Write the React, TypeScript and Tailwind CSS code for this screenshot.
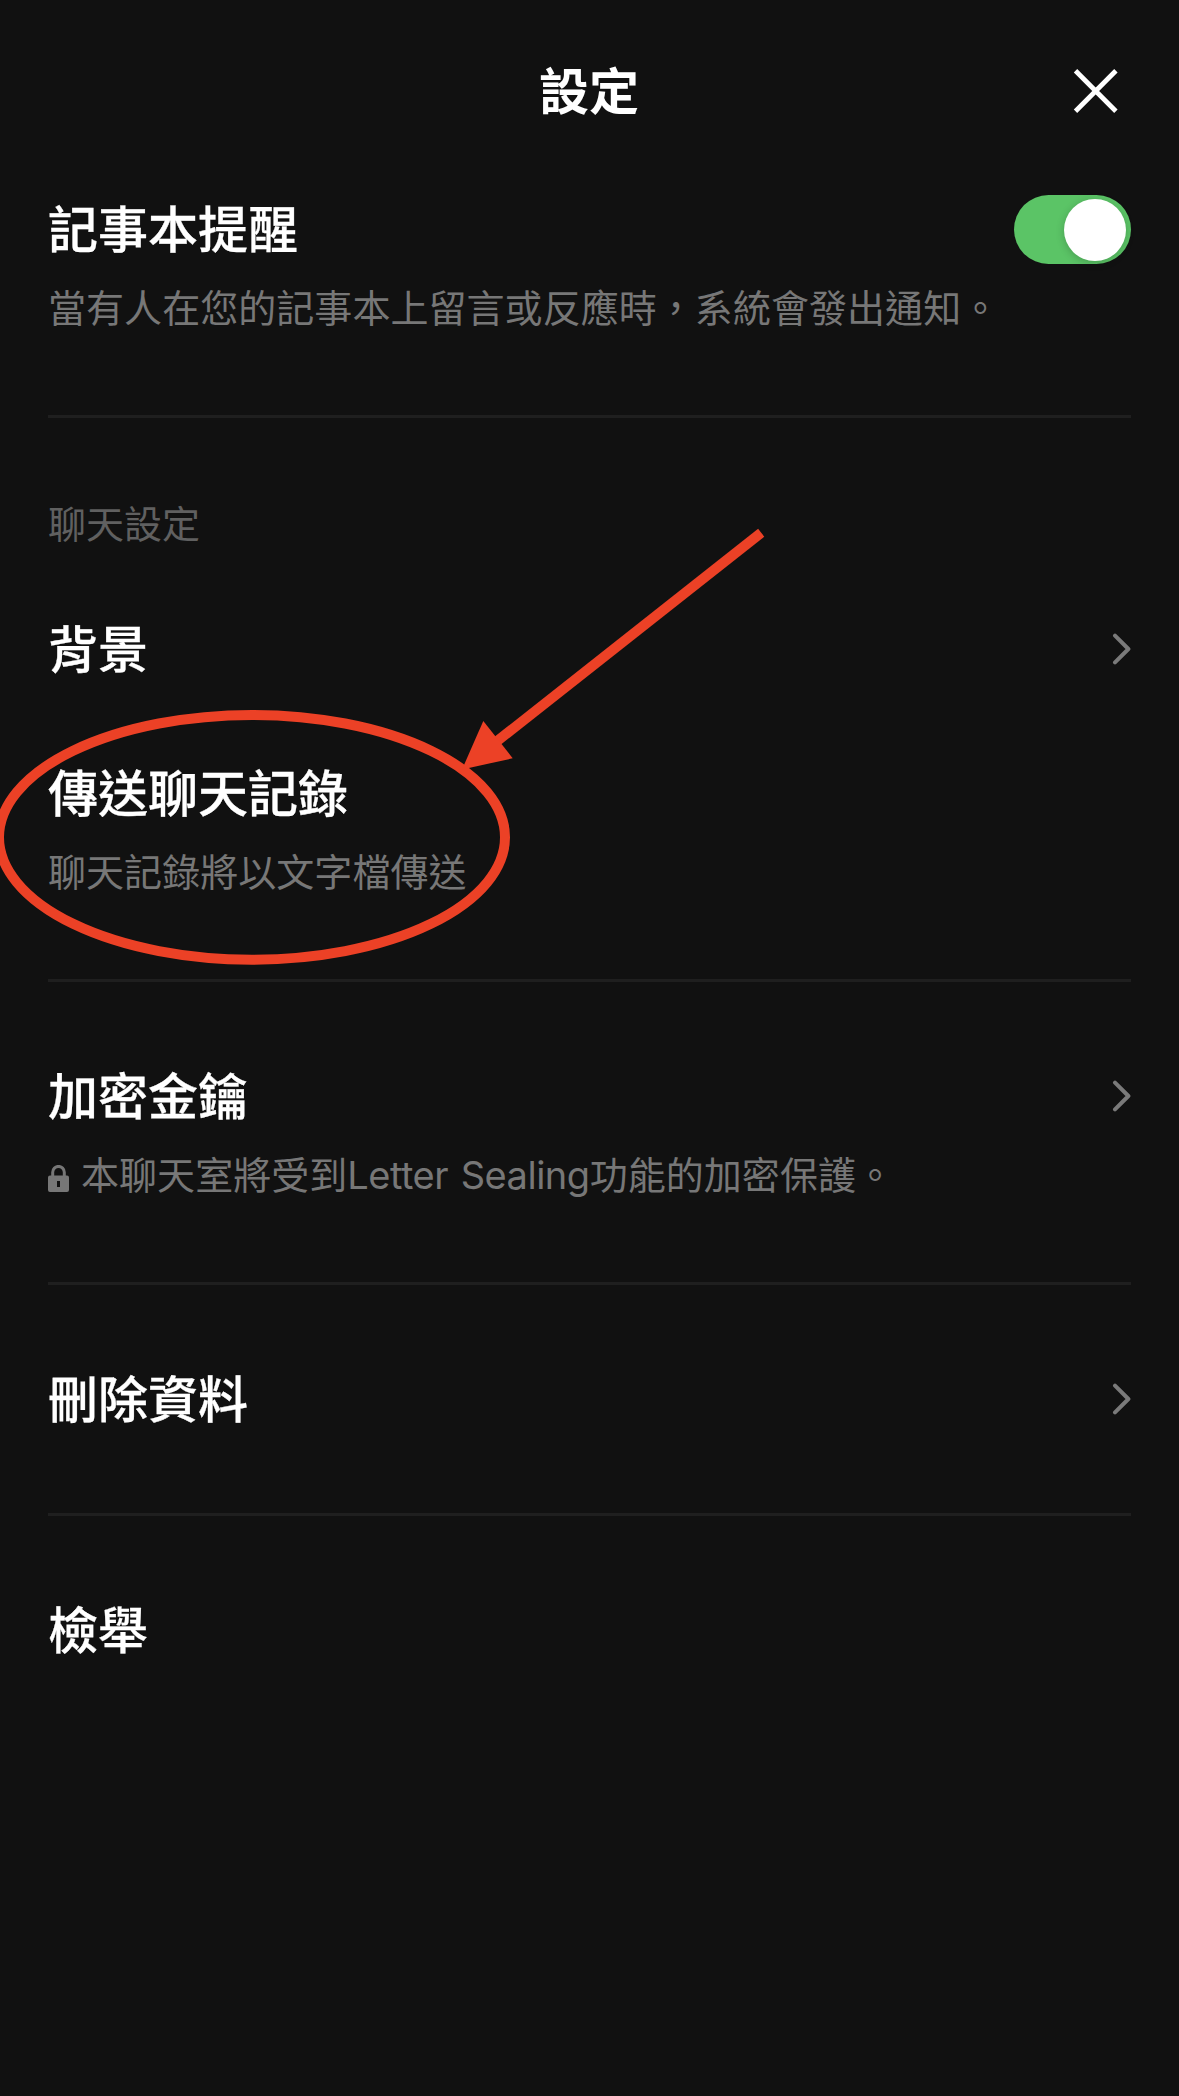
import type { ReactNode } from 'react';

function Chevron() {
  return (
    <svg className="mb-[2px]" width="20" height="34" viewBox="0 0 20 34" fill="none">
      <path d="M4 3.6 L17.4 17 L4 30.4" stroke="#7a7a7a" strokeWidth="4" strokeLinecap="round" strokeLinejoin="round" />
    </svg>
  );
}

function Lock() {
  return (
    <svg className="mr-3 mt-[7px] shrink-0" width="21" height="27" viewBox="0 0 21 27">
      <path d="M4.7 12 V7.2 a5.8 5.8 0 0 1 11.6 0 V12" fill="none" stroke="#777" strokeWidth="3" />
      <path fillRule="evenodd" d="M2 10.5 H19 a2 2 0 0 1 2 2 V25 a2 2 0 0 1 -2 2 H2 a2 2 0 0 1 -2 -2 V12.5 a2 2 0 0 1 2 -2 Z M9 16 V22 H12 V16 Z" fill="#777" />
    </svg>
  );
}

function Row({ title, sub, right }: { title: string; sub?: ReactNode; right?: ReactNode }) {
  return (
    <div>
      <div className="flex h-[72px] items-center justify-between">
        <span className="text-[50px] font-medium leading-[72px] [-webkit-text-stroke:0.3px_white]">{title}</span>
        {right}
      </div>
      {sub && <div className="mt-[15px] flex h-[54px] items-center whitespace-nowrap text-[38px] leading-[54px] tracking-[0.05px] text-[#777777]">{sub}</div>}
    </div>
  );
}

function Annotation() {
  return (
    <svg className="pointer-events-none absolute left-0 top-[500px]" width="800" height="500" viewBox="0 500 800 500">
      <ellipse cx="252" cy="837.3" rx="253" ry="122.4" fill="none" stroke="#ec4126" strokeWidth="10" />
      <path d="M761.2 532.8 L496 742" stroke="#ec4126" strokeWidth="10" />
      <path d="M462 769.5 L483.3 721 L512.7 758.3 Z" fill="#ec4126" />
    </svg>
  );
}

export default function App() {
  return (
    <main className="relative h-[2096px] w-[1179px] overflow-hidden bg-[#111111] px-12 font-['Inter','Noto_Sans_CJK_TC',sans-serif] text-white">
      <header className="grid h-[184px] grid-cols-3 items-center">
        <span />
        <h1 className="pr-px text-center text-[50px] font-bold">設定</h1>
        <svg className="mb-[2px] mr-3 justify-self-end" width="46" height="46" viewBox="0 0 46 46">
          <path d="M2.5 2.8 L42.9 43.2 M42.9 2.8 L2.5 43.2" stroke="#fff" strokeWidth="4.8" />
        </svg>
      </header>
      <section className="h-[234px] border-b-[3px] border-[#1f1f1f] pt-[10px]">
        <Row
          title="記事本提醒"
          sub="當有人在您的記事本上留言或反應時，系統會發出通知。"
          right={<span className="mb-px flex h-[69px] w-[117px] items-center justify-end rounded-full bg-[#5bc466] pr-[5px]"><span className="size-[62px] rounded-full bg-white shadow-[0_2px_8px_rgba(0,0,0,0.2)]" /></span>}
        />
      </section>
      <section className="h-[564px] border-b-[3px] border-[#1f1f1f] pt-[79px]">
        <h2 className="text-[38px] leading-[54px] text-[#606060]">聊天設定</h2>
        <div className="mt-[63px]"><Row title="背景" right={<Chevron />} /></div>
        <div className="mt-[72px]"><Row title="傳送聊天記錄" sub="聊天記錄將以文字檔傳送" /></div>
      </section>
      <section className="h-[303px] border-b-[3px] border-[#1f1f1f] pt-[79px]">
        <Row
          title="加密金鑰"
          right={<Chevron />}
          sub={<><Lock /><span>本聊天室將受到<span className="tracking-[-0.5px] [word-spacing:2.5px]">Letter Sealing</span>功能的加密保護。</span></>}
        />
      </section>
      <section className="h-[231px] border-b-[3px] border-[#1f1f1f] pt-[79px]"><Row title="刪除資料" right={<Chevron />} /></section>
      <section className="pt-[79px]"><Row title="檢舉" /></section>
      <Annotation />
    </main>
  );
}
